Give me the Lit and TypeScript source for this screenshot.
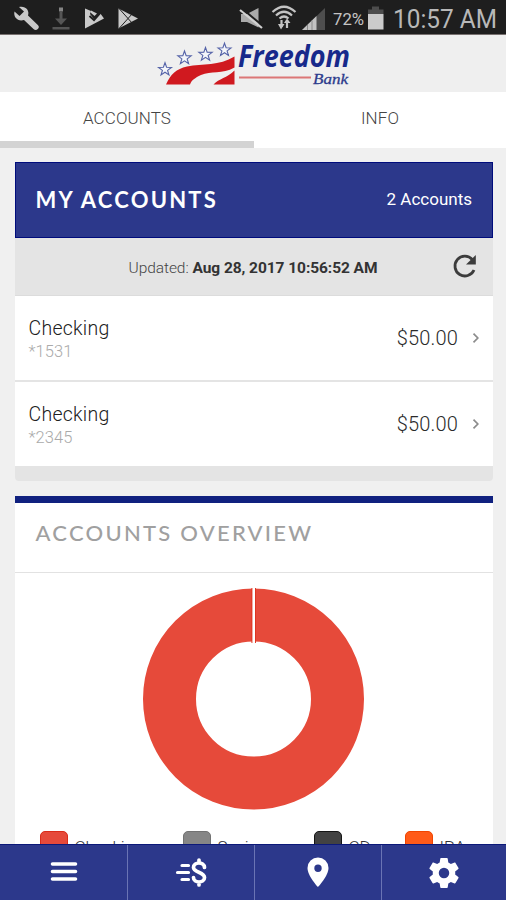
import { LitElement, html, css, svg } from "lit";
import { customElement } from "lit/decorators.js";

const star = (x: number, y: number, r: number) => {
  const pts = Array.from({ length: 10 }, (_, i) => {
    const a = ((i * 36 - 90) * Math.PI) / 180;
    const q = i % 2 ? r * 0.4 : r;
    return `${(x + q * Math.cos(a)).toFixed(2)},${(y + q * Math.sin(a)).toFixed(2)}`;
  }).join(" ");
  return svg`<polygon points=${pts} fill="#f4f6fb" stroke="#5563a8" stroke-width="1.1"/>`;
};

@customElement("status-bar")
class StatusBar extends LitElement {
  static styles = css`
    :host { display: block; height: 35px; background: #1e1e1e; border-bottom: 1px solid #77706f; box-sizing: border-box; }
    svg { display: block; }
    text { font-family: Roboto, sans-serif; fill: #c4c4c4; }
    .small { font-size: 17px; }
    .clock { font-size: 25.5px; fill: #b8b8b8; }
  `;
  render() {
    return html`<svg width="506" height="34" viewBox="0 0 506 34">
      <path d="M19 7 L24 11.500 L19.500 16 L14.500 11.500 C13 17 18 22 24 20 L33.500 29 C35 30.500 36.500 30.300 37.800 29 C39.200 27.600 39.200 26.300 37.800 25 L28 15.500 C30 10 25 5.500 19 7 Z" fill="#c9c9c9"/>
      <path d="M85 8.500 L91 11 L90 14 L94 19 L100 13 L104 18.500 L85 28.500 Z" fill="#c9c9c9"/>
      <path d="M91 10.500 L97 13.500 L94.500 16 L90.500 12.500 Z" fill="#c9c9c9"/>
      <path d="M89.500 16 L94 20 L101 12" fill="none" stroke="#1e1e1e" stroke-width="2"/>
      <path d="M118.500 8.500 L138 18.500 L118.500 28.500 Z" fill="#c9c9c9"/>
      <path d="M119.500 9 L132.500 23.500 M119.500 28 L132.500 13.500" fill="none" stroke="#1e1e1e" stroke-width="1"/>
      <g fill="#555">
        <rect x="59" y="7.500" width="4" height="4" fill="#858585"/><rect x="59.500" y="12" width="3" height="7"/>
        <path d="M55 18.500 H67 L61 25 Z"/><rect x="52.500" y="27" width="17" height="2.500"/>
      </g>
      <path d="M241 14 H247 L258.500 8 V27.500 L247 22 H241 Z" fill="#aaa"/>
      <path d="M241.500 8 L264 27" stroke="#1e1e1e" stroke-width="2"/>
      <path d="M240 10 L262 28" stroke="#d0d0d0" stroke-width="2.200"/>
      <g fill="none" stroke="#c4c4c4" stroke-width="2.200">
        <path d="M272.500 12 Q284 1.500 295.500 12 M276 15.500 Q284 8 292 15.500 M279.500 18.500 Q284 14.500 288.500 18.500"/>
        <path d="M281.500 20 V27 M287 20 V28"/>
      </g>
      <path d="M278 24 H284.500 L281 29.500 Z M284 23 L287 18.500 L290.500 23 Z" fill="#c4c4c4"/>
      <path d="M302 30 L325 8 V30 Z" fill="#4e4e4e"/><path d="M302 30 L316.500 16 V30 Z" fill="#c2c2c2"/>
      <path d="M307.500 25 V30 M312 20.500 V30" stroke="#8a8a8a" stroke-width="1"/>
      <text class="small" x="333" y="25" textLength="31" lengthAdjust="spacingAndGlyphs">72%</text>
      <path d="M372 6.500 H379 V9.500 H383.500 V14 H368 V9.500 H372 Z" fill="#4d4d4d"/>
      <rect x="368" y="14" width="15.500" height="15.500" fill="#cbcbcb"/>
      <text class="clock" x="393" y="27.500" textLength="104" lengthAdjust="spacingAndGlyphs">10:57 AM</text>
    </svg>`;
  }
}

@customElement("bank-logo")
class BankLogo extends LitElement {
  static styles = css`
    :host { display: flex; justify-content: center; height: 57px; background: #efefef; }
    svg { display: block; }
    .name { font: italic bold 30px "Open Sans", sans-serif; fill: #17298b; }
    .bank { font: italic 15.5px "Liberation Serif", serif; fill: #2c3b8c; stroke: #2c3b8c; stroke-width: 0.3; }
  `;
  render() {
    return html`<svg width="210" height="57" viewBox="148 35 210 57">
      ${star(165, 69.500, 6.800)}${star(184.500, 58, 7)}${star(205.500, 54.500, 7)}${star(224.500, 50, 6.800)}
      <path d="M166 84.500 C171 74 176 69 187 66.500 C203 63.500 219 66 234.500 56.500 V67.500 C222 74.500 211 70.500 201 75 C195 78 191.500 80 190 84.500 Z" fill="#d0191f"/>
      <path d="M213.500 84.500 C219 78.500 227 78 234.500 70.500 V84.500 Z" fill="#d0191f"/>
      <text class="name" x="238" y="66.500" textLength="112" lengthAdjust="spacingAndGlyphs">Freedom</text>
      <path d="M239 77.500 H311" stroke="#dc7777" stroke-width="2"/>
      <text class="bank" x="313" y="84" textLength="35" lengthAdjust="spacingAndGlyphs">Bank</text>
    </svg>`;
  }
}

@customElement("account-row")
class AccountRow extends LitElement {
  static properties = { name: {}, mask: {}, amount: {} };
  declare name: string;
  declare mask: string;
  declare amount: string;
  static styles = css`
    :host { display: flex; align-items: center; height: 84px; padding: 0 12px 0 14px; background: #fff; box-sizing: border-box; font-family: Roboto, sans-serif; }
    .who { flex: 1; padding-top: 2px; }
    .name { font-size: 19.500px; line-height: 24px; color: #202020; font-weight: 300; letter-spacing: 0.25px; }
    .mask { font-size: 16.500px; line-height: 21px; color: #aaa; font-weight: 300; letter-spacing: 0.1px; }
    .amount { font-size: 20px; color: #2a2a2a; font-weight: 300; letter-spacing: 0.15px; margin-right: 14px; }
    svg { display: block; }
  `;
  render() {
    return html`<div class="who"><div class="name">${this.name}</div><div class="mask">${this.mask}</div></div>
      <div class="amount">${this.amount}</div>
      <svg width="9" height="12" viewBox="0 0 9 12"><path d="M1.500 1.700 L5.800 6 L1.500 10.300" fill="none" stroke="#8c8c8c" stroke-width="1.700"/></svg>`;
  }
}

@customElement("app-root")
class AppRoot extends LitElement {
  static styles = css`
    :host { display: flex; flex-direction: column; height: 900px; width: 506px; overflow: hidden; background: #f0f0f0; font-family: Roboto, sans-serif; }
    svg { display: block; }
    .tabs { display: grid; grid-template-columns: 254px 252px; height: 56px; flex: none; background: #fff; }
    .tab { border-bottom: 7px solid transparent; display: flex; align-items: center; justify-content: center; font-size: 17px; color: #444; font-weight: 300; letter-spacing: 0.1px; padding-top: 3px; box-sizing: border-box; }
    .tab.on { border-color: #d3d3d3; }
    .content { flex: 1; min-height: 0; overflow: hidden; padding: 14px 13px 0 14.500px; }
    .accounts { border-radius: 0 0 4px 4px; overflow: hidden; }
    .head { display: flex; align-items: center; justify-content: space-between; height: 76px; box-sizing: border-box; padding: 0 20px 3px 20px; background: #2c388b; border: 1px solid #000c7c; color: #fff; }
    h2 { margin: 0; font: bold 22px Lato, sans-serif; }
    .head h2 { letter-spacing: 2.200px; padding-top: 1px; }
    .count { font-size: 17px; }
    .updated { display: flex; align-items: center; height: 58px; box-sizing: border-box; padding: 2px 16px 2px 0; background: #e4e4e4; border-bottom: 1px solid #dcdcdc; }
    .stamp { flex: 1; padding: 2px 0 0 114px; white-space: nowrap; font-size: 15.500px; color: #666; letter-spacing: -0.06px; }
    .stamp span { font-weight: 300; color: #444; }
    .stamp b { color: #333; }
    .sep { height: 2px; background: #e4e4e4; }
    .foot { height: 15px; background: #e4e4e4; }
    .overview { margin-top: 15px; border-top: 7px solid #10217f; background: #fff; height: 420px; }
    .title { height: 69px; box-sizing: border-box; padding: 16px 21px 0; }
    .title h2 { color: #a0a0a0; letter-spacing: 2.250px; font-weight: 500; }
    .chart { border-top: 1px solid #e2e2e2; padding: 15px 0 0 127.500px; }
    .legend { display: grid; grid-template-columns: 143px 131px 91px auto; padding: 21px 0 0 25.500px; }
    .item { display: flex; gap: 7px; font-size: 17px; line-height: 20px; color: #333; font-weight: 300; }
    .item span { padding-top: 6px; }
    .swatch { width: 27.500px; height: 27px; border-radius: 5px; box-sizing: border-box; }
    .red { background: #e64a3a; border: 1px solid #d92b18; }
    .gray { background: #868686; border: 1px solid #727272; }
    .dark { background: #424242; border: 1px solid #151515; }
    .orange { background: #ff5a18; border: 1px solid #f04400; }
    nav { flex: none; display: grid; grid-template-columns: 128px 127px 127px 1fr; height: 56px; box-sizing: border-box; background: #2c388b; border-top: 1px solid #0c1979; }
    nav div { display: flex; align-items: center; justify-content: center; border-right: 1px solid #6a74b4; }
    nav div:last-child { border: 0; }
  `;
  render() {
    return html`
      <status-bar></status-bar>
      <bank-logo></bank-logo>
      <div class="tabs"><div class="tab on">ACCOUNTS</div><div class="tab">INFO</div></div>
      <div class="content">
        <section class="accounts">
          <div class="head"><h2>MY ACCOUNTS</h2><span class="count">2 Accounts</span></div>
          <div class="updated">
            <div class="stamp"><span>Updated:</span> <b>Aug 28, 2017 10:56:52 AM</b></div>
            <svg width="26" height="28" viewBox="0 0 26 28"><path d="M21.300 6.500 A9.900 9.900 0 1 0 23 17" fill="none" stroke="#3c3c3c" stroke-width="2.800"/><path d="M24.800 2 V11.500 H15 Z" fill="#3c3c3c"/></svg>
          </div>
          <account-row name="Checking" mask="*1531" amount="$50.00"></account-row>
          <div class="sep"></div>
          <account-row name="Checking" mask="*2345" amount="$50.00"></account-row>
          <div class="foot"></div>
        </section>
        <section class="overview">
          <div class="title"><h2>ACCOUNTS OVERVIEW</h2></div>
          <div class="chart">
            <svg width="224" height="222" viewBox="0 0 224 222">
              <circle cx="111.500" cy="111" r="84" fill="none" stroke="#e64a3a" stroke-width="53"/>
              <path d="M111.700 0 V55" stroke="#dc3420" stroke-width="4.500"/>
              <path d="M111.700 0 V56" stroke="#fff" stroke-width="2.600"/>
            </svg>
          </div>
          <div class="legend">
            <div class="item"><i class="swatch red"></i><span>Checking</span></div>
            <div class="item"><i class="swatch gray"></i><span>Savings</span></div>
            <div class="item"><i class="swatch dark"></i><span>CD</span></div>
            <div class="item"><i class="swatch orange"></i><span>IRA</span></div>
          </div>
        </section>
      </div>
      <nav>
        <div><svg width="28" height="28" viewBox="0 0 28 28"><path d="M2.500 5 H25.500 M2.500 12.500 H25.500 M2.500 20 H25.500" stroke="#fff" stroke-width="3.600" stroke-linecap="round"/></svg></div>
        <div><svg width="34" height="30" viewBox="0 0 34 30" fill="none" stroke="#fff" stroke-linecap="round">
          <path d="M8 7.500 H14.500 M3.500 14.500 H14.500 M8 21.500 H14.500" stroke-width="3.200"/>
          <path d="M30.500 9.500 C30 3.500 19.500 3.500 19.500 9.500 C19.500 14.500 30.500 14 30.500 19.500 C30.500 25.500 19.500 25.500 19.500 19.500 M25 2 V4.500 M25 24.500 V27" stroke-width="3.700"/></svg></div>
        <div><svg width="24" height="32" viewBox="0 0 24 32"><path fill-rule="evenodd" d="M12 0.500 A10.500 10.500 0 0 0 1.500 11 C1.500 19 12 30 12 30 S22.500 19 22.500 11 A10.500 10.500 0 0 0 12 0.500 Z M12 7.500 A3.700 3.700 0 1 1 12 14.900 A3.700 3.700 0 0 1 12 7.500 Z" fill="#fff"/></svg></div>
        <div><svg width="36" height="36" viewBox="0 0 24 24"><path fill="#fff" d="M19.430 12.980c.040-.320.070-.640.070-.980s-.030-.660-.070-.980l2.110-1.650c.190-.150.240-.420.120-.640l-2-3.460c-.120-.220-.390-.300-.610-.220l-2.490 1c-.520-.400-1.080-.730-1.690-.980l-.380-2.650C14.460 2.180 14.250 2 14 2h-4c-.250 0-.460.180-.490.420l-.380 2.650c-.610.250-1.170.590-1.690.980l-2.490-1c-.230-.090-.490 0-.610.220l-2 3.460c-.130.220-.070.490.120.640l2.110 1.650c-.040.320-.070.650-.070.980s.030.660.070.980l-2.110 1.650c-.190.150-.240.420-.120.640l2 3.460c.120.220.390.300.610.220l2.490-1c.520.400 1.080.730 1.690.980l.380 2.650c.030.240.240.420.490.420h4c.250 0 .460-.180.490-.420l.380-2.650c.610-.250 1.170-.590 1.690-.980l2.490 1c.230.090.490 0 .610-.220l2-3.460c.120-.220.070-.490-.120-.640zM12 15.500A3.500 3.500 0 1 1 12 8.500 A3.500 3.500 0 0 1 12 15.500z"/></svg></div>
      </nav>`;
  }
}
